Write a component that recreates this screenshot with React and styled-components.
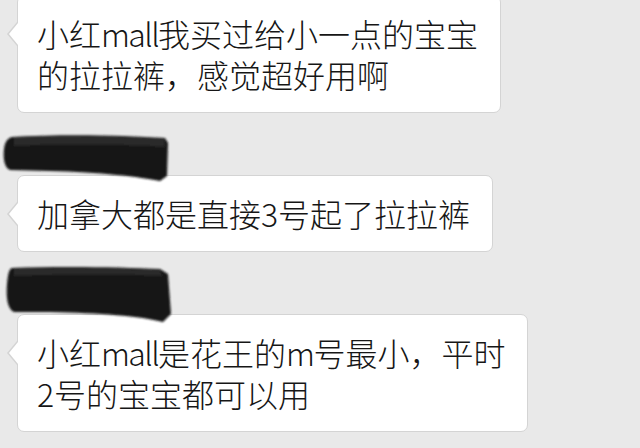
import styled, { createGlobalStyle } from "styled-components"

const GlobalStyle = createGlobalStyle`
  html, body {
    margin: 0;
    padding: 0;
    background: #e9e9e9;
    overflow: hidden;
  }
`

const Page = styled.div`
  width: 640px;
  height: 448px;
  overflow: hidden;
  background: #e9e9e9;
  font-family: "Noto Sans CJK SC", "Noto Sans", sans-serif;
`

const Chat = styled.div`
  display: flex;
  flex-direction: column;
  align-items: flex-start;
  margin-top: -5px;
  padding-left: 17px;
`

const Group = styled.div`
  display: flex;
  flex-direction: column;
  align-items: flex-start;
  margin-top: ${props => (props.first ? 0 : 14)}px;
`

const NameRow = styled.div`
  position: relative;
  z-index: 2;
  height: 48px;
  margin-left: -17px;
`

const Bubble = styled.div`
  position: relative;
  background: #fff;
  border: 1px solid #d4d4d4;
  border-radius: 7px;
  padding: 17px 22px 17px 19px;
  color: #161616;
  font-size: 32px;
  font-weight: 300;
  line-height: 41px;
  white-space: nowrap;

  &::before,
  &::after {
    content: "";
    position: absolute;
    width: 0;
    height: 0;
    border-style: solid;
    border-color: transparent;
  }

  &::before {
    left: -11px;
    top: 26px;
    border-width: 12px 10px 12px 0;
    border-right-color: #d4d4d4;
  }

  &::after {
    left: -9px;
    top: 27px;
    border-width: 11px 9px 11px 0;
    border-right-color: #fff;
  }
`

const Line = styled.div`
  display: flex;
  height: 41px;
`

const Latin = styled.span`
  letter-spacing: -1.6px;
`

const Ink = styled.svg`
  display: block;
  overflow: visible;
`

const scribbles = {
  a: {
    body: "M12 10 C60 7, 120 8, 165 11 L168 16 L167 49 L160 54 C140 50, 100 45, 50 44 L10 43 C4 41, 3 30, 4 22 C5 14, 8 11, 12 10 Z",
    band: "M14 10 C60 8, 120 9, 164 12 L165 20 C120 17, 60 17, 14 19 Z",
  },
  b: {
    body: "M12 2 C60 0, 120 1, 160 3 L168 8 L171 48 L163 56 C140 50, 100 47, 50 46 L14 46 C7 43, 6 30, 7 18 C8 8, 9 3, 12 2 Z",
    band: "M14 3 C60 1, 120 2, 160 4 L162 10 C120 8, 60 8, 14 10 Z",
  },
}

const Scribble = ({ variant }) => {
  const s = scribbles[variant]
  return (
    <Ink width="180" height="48" viewBox="0 0 180 48">
      <defs>
        <filter id={"soft-" + variant} x="-10%" y="-30%" width="120%" height="160%">
          <feGaussianBlur stdDeviation="1.1" />
        </filter>
      </defs>
      <g filter={`url(#soft-${variant})`}>
        <path d={s.body} fill="#161616" />
        <path d={s.band} fill="#2e2e2e" opacity="0.8" />
      </g>
    </Ink>
  )
}

// split latin runs out so their spacing can be tightened
const renderLine = (text) =>
  text.split(/([a-z]+)/).map((part, k) =>
    /^[a-z]+$/.test(part) ? <Latin key={k}>{part}</Latin> : part
  )

const messages = [
  { id: 1, lines: ["小红mall我买过给小一点的宝宝", "的拉拉裤，感觉超好用啊"] },
  { id: 2, name: "a", lines: ["加拿大都是直接3号起了拉拉裤"] },
  { id: 3, name: "b", lines: ["小红mall是花王的m号最小，平时", "2号的宝宝都可以用"] },
]

const App = () => {
  return (
    <Page>
      <GlobalStyle />
      <Chat>
        {messages.map((msg, i) => (
          <Group key={msg.id} first={i === 0}>
            {msg.name && (
              <NameRow>
                <Scribble variant={msg.name} />
              </NameRow>
            )}
            <Bubble>
              {msg.lines.map((line, j) => (
                <Line key={j}>{renderLine(line)}</Line>
              ))}
            </Bubble>
          </Group>
        ))}
      </Chat>
    </Page>
  )
}

export default App
